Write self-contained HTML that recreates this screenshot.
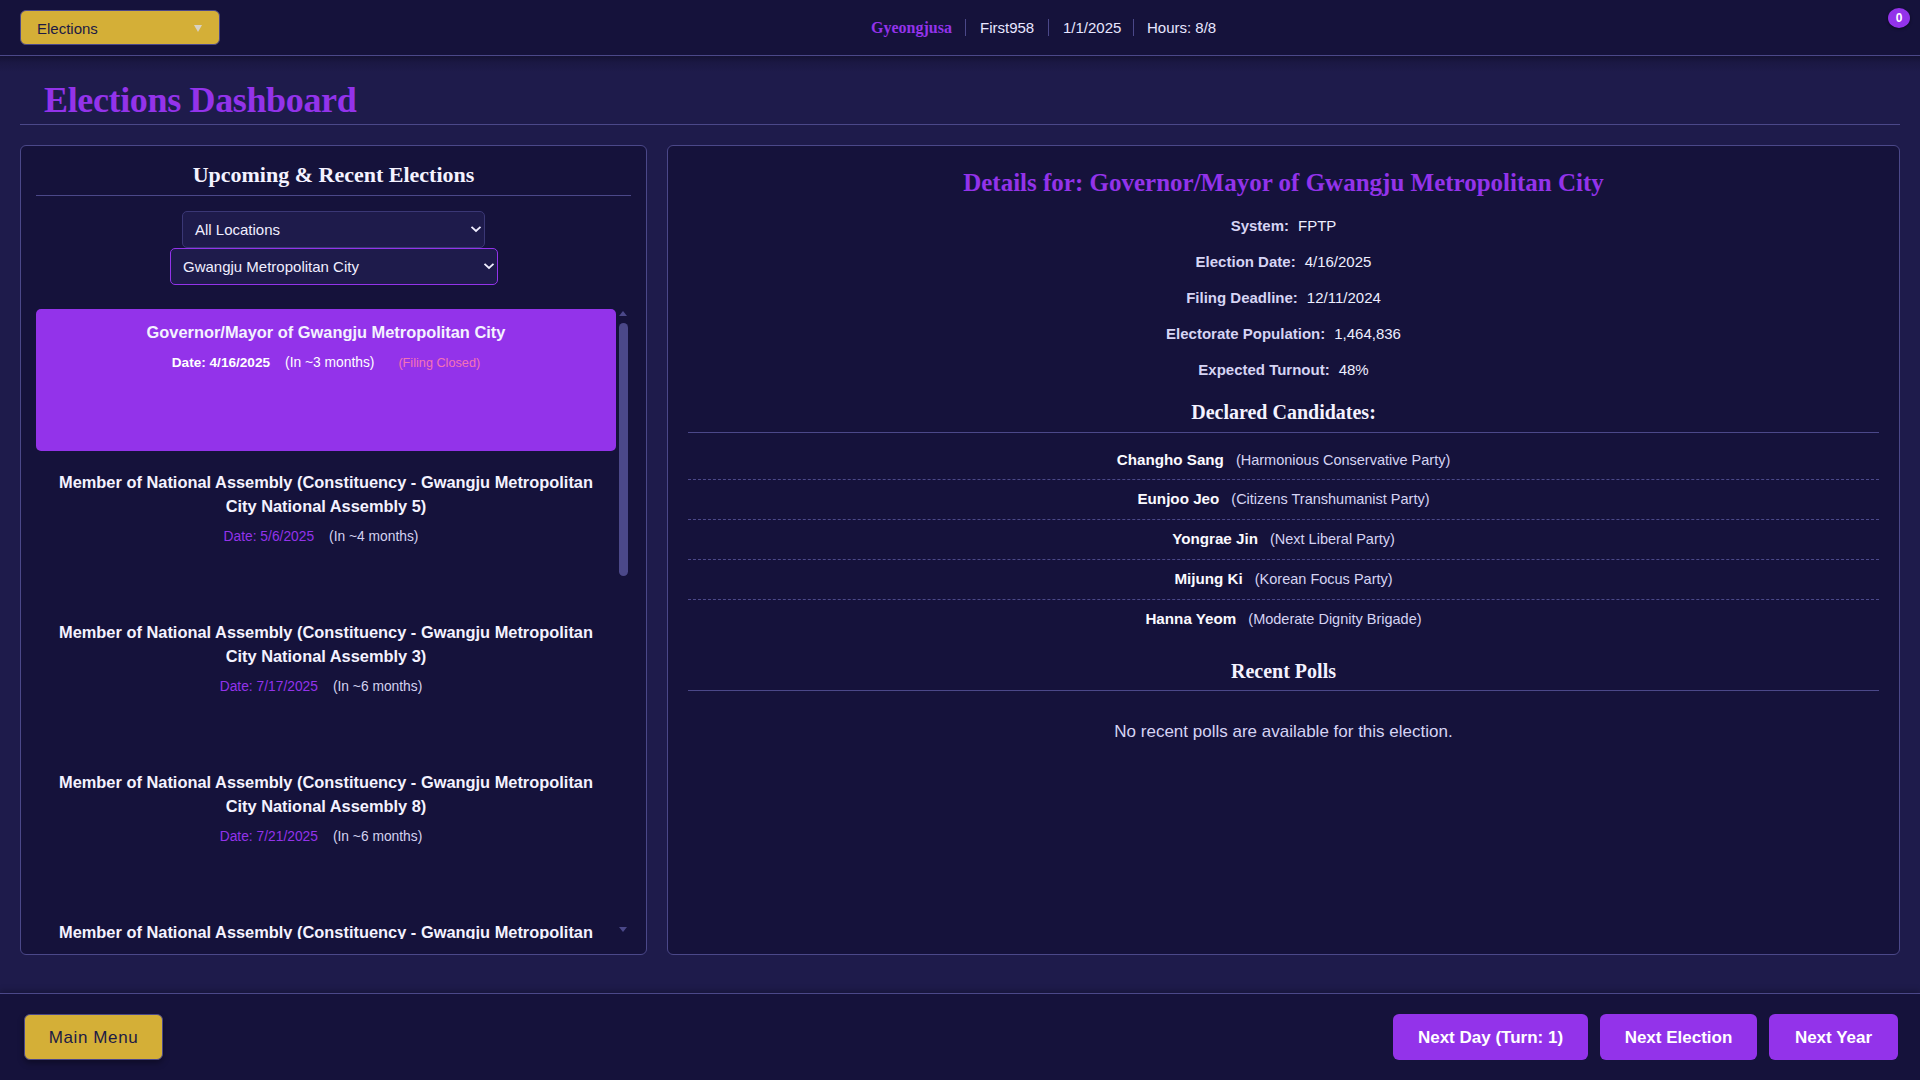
<!DOCTYPE html>
<html><head><meta charset="utf-8">
<style>
*{box-sizing:border-box;margin:0;padding:0}
html,body{width:1920px;height:1080px;overflow:hidden}
body{background:#1e1b4b;font-family:"Liberation Sans",sans-serif;color:#e8e6ff;position:relative}
.serif{font-family:"Liberation Serif",serif;font-weight:bold}
#hdr{position:absolute;left:0;top:0;width:1920px;height:56px;background:#15123b;border-bottom:1px solid #4b4889}
#ddl{position:absolute;left:20px;top:10px;width:200px;height:35px;background:#d4af37;border:1px solid #4b4889;border-radius:6px;color:#1c1a45;font-size:14px}
#ddl span{position:absolute;left:16px;top:9px;font-size:15px}
#ddl i{position:absolute;left:172.5px;top:14px;width:0;height:0;border-left:4.5px solid transparent;border-right:4.5px solid transparent;border-top:7.5px solid #d8d2c4}
#hc{position:absolute;top:19px;left:0;width:1920px;height:20px;font-size:15px;color:#e8e6ff}
#hc div{position:absolute;top:0;white-space:nowrap}
.sep{position:absolute;top:0;width:1px;height:17px;background:#4b4889}
#badge{position:absolute;left:1888px;top:8px;width:22px;height:20px;border-radius:50%;background:#9333ea;color:#fff;font-size:12px;font-weight:bold;text-align:center;line-height:20px;box-shadow:0 1px 3px rgba(0,0,0,.5)}
#shadow{position:absolute;left:0;top:56px;width:1920px;height:16px;background:linear-gradient(rgba(12,10,35,.55),rgba(12,10,35,.2) 40%,rgba(30,27,75,0))}
#title{position:absolute;left:44px;top:79px;font-size:36px;letter-spacing:-0.35px;color:#9333ea;white-space:nowrap}
#tline{position:absolute;left:20px;top:124px;width:1880px;height:1px;background:#4b4889}
.panel{position:absolute;top:145px;height:810px;background:#15123b;border:1px solid #4b4889;border-radius:6px}
#lp{left:20px;width:627px}
#rp{left:667px;width:1233px}
#lt{position:absolute;left:0;top:16px;width:625px;text-align:center;font-size:22px;color:#f4f2ff}
#lline{position:absolute;left:15px;top:49px;width:595px;height:1px;background:#4b4889}
.sel{position:absolute;height:37px;border-radius:5px;font-size:15px;color:#f0eeff}
.sel span{position:absolute;left:12px;top:9px;white-space:nowrap}
.sel svg{position:absolute;top:13px}
#s1{left:161px;top:65px;width:303px;background:#1e1b4b;border:1px solid #3a3775}
#s2{left:149px;top:102px;width:328px;background:#1e1b4b;border:1px solid #9333ea}
#list{position:absolute;left:15px;top:163px;width:595px;height:630px;overflow:hidden}
.item{position:absolute;left:0;width:580px;height:142px;border-radius:5px;text-align:center}
.item.on{background:#9333ea}
.it{position:absolute;left:0;top:11px;width:580px;font-size:16.4px;font-weight:bold;line-height:24px;color:#f4f2ff;padding:0 20px}
.id{position:absolute;left:0;width:580px;font-size:13.8px;white-space:nowrap;color:#d4d2f0}
.id b{font-weight:bold}
.pd{color:#9333ea}
.g1{margin-left:15px}
.g2{margin-left:24px}
.fc{color:#f472b6;font-size:12.7px}
#sb{position:absolute;left:598px;top:163px;width:9px;height:630px}
#sbt{position:absolute;left:0;top:14px;width:9px;height:253px;border-radius:5px;background:#4b4889}
.arr{position:absolute;left:0;width:0;height:0;border-left:4.5px solid transparent;border-right:4.5px solid transparent}
#rt{position:absolute;left:0;top:23px;width:1231px;text-align:center;font-size:25px;color:#9333ea;white-space:nowrap}
.info{position:absolute;left:0;width:1231px;text-align:center;font-size:15px;white-space:nowrap}
.info b{color:#d6d4f4;margin-right:9px}
.info span{color:#eeeeff}
.sh{position:absolute;left:0;width:1231px;text-align:center;font-size:20px;margin-top:1px;color:#f4f2ff}
.hl{position:absolute;left:20px;width:1191px;height:1px;background:#4b4889}
.cand{position:absolute;left:0;width:1231px;text-align:center;white-space:nowrap}
.cand b{font-size:15.2px;color:#fbfaff;margin-right:12px}
.cand span{font-size:14.5px;color:#d6d4f4}
.dl{position:absolute;left:20px;width:1191px;height:0;border-top:1px dashed #4b4889}
#np{position:absolute;left:0;top:576px;width:1231px;text-align:center;font-size:17px;color:#d6d4f4}
#ftr{position:absolute;left:0;top:993px;width:1920px;height:87px;background:#15123b;border-top:1px solid #4b4889;box-shadow:0 -2px 6px rgba(0,0,0,.25)}
.btn{position:absolute;top:20px;height:46px;border-radius:6px;text-align:center;font-size:17px;line-height:48px;white-space:nowrap}
#mm{left:24px;width:139px;line-height:46px;background:#d4af37;color:#1c1a45;border:1px solid #4b4889;letter-spacing:0.6px;box-shadow:0 3px 6px rgba(0,0,0,.35)}
.pb{background:#9333ea;color:#fff;font-weight:bold}
</style></head><body>
<div id="hdr">
  <div id="ddl"><span>Elections</span><i></i></div>
  <div id="hc">
    <div class="serif" style="left:871px;top:0px;font-size:16px;color:#9333ea;font-weight:bold">Gyeongjusa</div>
    <div class="sep" style="left:965px"></div>
    <div style="left:980px">First958</div>
    <div class="sep" style="left:1048px"></div>
    <div style="left:1063px">1/1/2025</div>
    <div class="sep" style="left:1133px"></div>
    <div style="left:1147px">Hours: 8/8</div>
  </div>
  <div id="badge">0</div>
</div>
<div id="shadow"></div>
<div id="title" class="serif">Elections Dashboard</div>
<div id="tline"></div>

<div id="lp" class="panel">
  <div id="lt" class="serif">Upcoming &amp; Recent Elections</div>
  <div id="lline"></div>
  <div id="s1" class="sel"><span>All Locations</span><svg style="left:287px" width="12" height="8" viewBox="0 0 12 8"><path d="M1.5 1.8 L6 6 L10.5 1.8" stroke="#f0eeff" stroke-width="1.8" fill="none"/></svg></div>
  <div id="s2" class="sel"><span>Gwangju Metropolitan City</span><svg style="left:312px" width="12" height="8" viewBox="0 0 12 8"><path d="M1.5 1.8 L6 6 L10.5 1.8" stroke="#f0eeff" stroke-width="1.8" fill="none"/></svg></div>
  <div id="list">
    <div class="item on" style="top:0">
      <div class="it">Governor/Mayor of Gwangju Metropolitan City</div>
      <div class="id" style="top:46px;color:#fff"><b style="font-size:13.6px">Date: 4/16/2025</b><span class="g1">(In ~3 months)</span><span class="fc g2">(Filing Closed)</span></div>
    </div>
    <div class="item" style="top:150px">
      <div class="it">Member of National Assembly (Constituency - Gwangju Metropolitan City National Assembly 5)</div>
      <div class="id" style="top:70px;padding-right:10px"><span class="pd">Date: 5/6/2025</span><span class="g1">(In ~4 months)</span></div>
    </div>
    <div class="item" style="top:300px">
      <div class="it">Member of National Assembly (Constituency - Gwangju Metropolitan City National Assembly 3)</div>
      <div class="id" style="top:70px;padding-right:10px"><span class="pd">Date: 7/17/2025</span><span class="g1">(In ~6 months)</span></div>
    </div>
    <div class="item" style="top:450px">
      <div class="it">Member of National Assembly (Constituency - Gwangju Metropolitan City National Assembly 8)</div>
      <div class="id" style="top:70px;padding-right:10px"><span class="pd">Date: 7/21/2025</span><span class="g1">(In ~6 months)</span></div>
    </div>
    <div class="item" style="top:600px">
      <div class="it">Member of National Assembly (Constituency - Gwangju Metropolitan City National Assembly 1)</div>
    </div>
  </div>
  <div id="sb">
    <div class="arr" style="top:2px;border-bottom:5px solid #4b4889"></div>
    <div id="sbt"></div>
    <div class="arr" style="top:618px;border-top:5px solid #4b4889"></div>
  </div>
</div>

<div id="rp" class="panel">
  <div id="rt" class="serif">Details for: Governor/Mayor of Gwangju Metropolitan City</div>
  <div class="info" style="top:71px"><b>System:</b><span>FPTP</span></div>
  <div class="info" style="top:107px"><b>Election Date:</b><span>4/16/2025</span></div>
  <div class="info" style="top:143px"><b>Filing Deadline:</b><span>12/11/2024</span></div>
  <div class="info" style="top:179px"><b>Electorate Population:</b><span>1,464,836</span></div>
  <div class="info" style="top:215px"><b>Expected Turnout:</b><span>48%</span></div>
  <div class="sh serif" style="top:254px">Declared Candidates:</div>
  <div class="hl" style="top:286px"></div>
  <div class="cand" style="top:305px"><b>Changho Sang</b><span>(Harmonious Conservative Party)</span></div>
  <div class="dl" style="top:333px"></div>
  <div class="cand" style="top:344px"><b>Eunjoo Jeo</b><span>(Citizens Transhumanist Party)</span></div>
  <div class="dl" style="top:373px"></div>
  <div class="cand" style="top:384px"><b>Yongrae Jin</b><span>(Next Liberal Party)</span></div>
  <div class="dl" style="top:413px"></div>
  <div class="cand" style="top:424px"><b>Mijung Ki</b><span>(Korean Focus Party)</span></div>
  <div class="dl" style="top:453px"></div>
  <div class="cand" style="top:464px"><b>Hanna Yeom</b><span>(Moderate Dignity Brigade)</span></div>
  <div class="sh serif" style="top:513px">Recent Polls</div>
  <div class="hl" style="top:544px"></div>
  <div id="np">No recent polls are available for this election.</div>
</div>

<div id="ftr">
  <div id="mm" class="btn">Main Menu</div>
  <div class="btn pb" style="left:1393px;width:195px">Next Day (Turn: 1)</div>
  <div class="btn pb" style="left:1600px;width:157px">Next Election</div>
  <div class="btn pb" style="left:1769px;width:129px">Next Year</div>
</div>
</body></html>
